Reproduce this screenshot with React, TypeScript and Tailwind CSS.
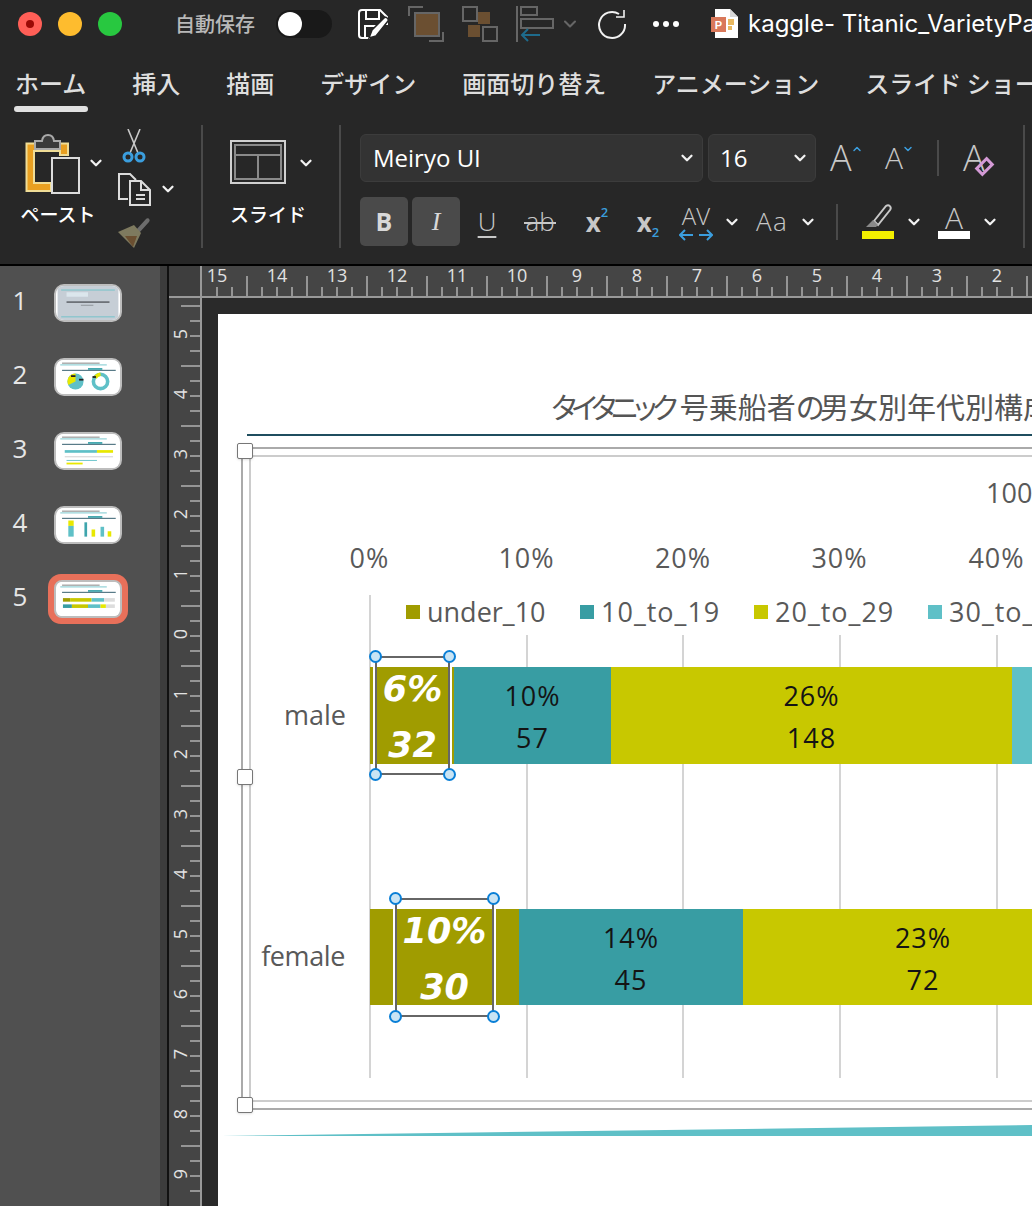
import { ChevronDown, ChevronUp } from "lucide-react";

const tabs = ["ホーム", "挿入", "描画", "デザイン", "画面切り替え", "アニメーション", "スライド ショー"];
const hNums = [15, 14, 13, 12, 11, 10, 9, 8, 7, 6, 5, 4, 3, 2];
const vNums = [5, 4, 3, 2, 1, 0, 1, 2, 3, 4, 5, 6, 7, 8, 9];
const gridLeft = ["left-[308px]", "left-[464px]", "left-[621px]", "left-[778px]"];

function Chev({ className = "" }: { className?: string }) {
  return <ChevronDown className={`size-[18px] shrink-0 text-[#f2f2f2] ${className}`} strokeWidth={3} />;
}

function Divider({ className = "" }: { className?: string }) {
  return <div className={`w-[2px] bg-[#4a4a4a] ${className}`} />;
}

function SaveIcon() {
  return (
    <svg width="32" height="30" viewBox="0 0 32 30" fill="none" stroke="#fff" strokeWidth="2" className="ml-[26px] shrink-0">
      <path d="M4 1h18l7 7v8M4 1a3 3 0 0 0-3 3v22a3 3 0 0 0 3 3h8" />
      <path d="M8 1v9h13V1M7 29V17h13" />
      <path d="M11 29l3-8L26 9c2-2 5 1 4 3L18 27z" fill="#fff" stroke="#272727" strokeWidth="1.5" />
    </svg>
  );
}

function ArrangeFront() {
  return (
    <svg width="36" height="36" viewBox="0 0 36 36" fill="none" className="ml-[18px] shrink-0">
      <path d="M1 10V1h14" stroke="#666" strokeWidth="2" />
      <path d="M35 26v9H21" stroke="#666" strokeWidth="2" />
      <rect x="7" y="7" width="24" height="23" fill="#6b4f31" stroke="#666" strokeWidth="2" />
    </svg>
  );
}

function GroupIcon() {
  return (
    <svg width="36" height="36" viewBox="0 0 36 36" fill="none" className="ml-[18px] shrink-0">
      <rect x="1" y="1" width="14" height="14" stroke="#666" strokeWidth="2" />
      <rect x="16" y="6" width="12" height="12" fill="#6b4f31" />
      <rect x="6" y="19" width="12" height="12" fill="#6b4f31" />
      <rect x="21" y="21" width="14" height="14" stroke="#666" strokeWidth="2" />
    </svg>
  );
}

function AlignIcon() {
  return (
    <svg width="38" height="36" viewBox="0 0 38 36" fill="none" className="ml-[18px] shrink-0">
      <path d="M1 0v36" stroke="#666" strokeWidth="2" />
      <rect x="5" y="1" width="16" height="8" stroke="#666" strokeWidth="2" />
      <rect x="5" y="13" width="32" height="9" stroke="#666" strokeWidth="2" />
      <path d="M24 29H6m6-6l-6 6 6 6" stroke="#1e6b8c" strokeWidth="2" />
    </svg>
  );
}

function RedoIcon() {
  return (
    <svg width="30" height="30" viewBox="0 0 30 30" fill="none" stroke="#f2f2f2" strokeWidth="2" className="ml-[17px] shrink-0">
      <path d="M22 5a13 13 0 1 0 6 10" />
      <path d="M19 8h8V1" strokeWidth="1.6" />
    </svg>
  );
}

function PptIcon() {
  return (
    <svg width="28" height="30" viewBox="0 0 28 30" className="ml-[32px] shrink-0">
      <path d="M4 0h15l8 8v21H4z" fill="#fff" />
      <path d="M19 0l8 8h-8z" fill="#d8d8d8" />
      <rect x="17" y="10" width="6" height="6" fill="#e8b860" />
      <rect x="17" y="17" width="4" height="4" fill="#e8b860" />
      <rect x="0" y="8" width="15" height="15" fill="#d9785a" />
      <text x="7.5" y="20" textAnchor="middle" fontSize="11" fontWeight="700" fill="#fff" fontFamily="Liberation Sans">P</text>
    </svg>
  );
}

function PasteIcon() {
  return (
    <svg width="56" height="62" viewBox="0 0 56 62" fill="none" className="ml-[5px] self-start">
      <path d="M1.5 10.5H43V22H35V18H9V50H26V58H1.5Z" fill="#e9a021" stroke="#f0dd96" strokeWidth="2" />
      <path d="M10 16V8h7c1-8 11-8 12 0h6v8z" fill="#3a3a3a" stroke="#a9a9a9" strokeWidth="2" />
      <rect x="27" y="25" width="27" height="35" stroke="#dcdcdc" strokeWidth="2" />
    </svg>
  );
}

function CutIcon() {
  return (
    <svg width="24" height="34" viewBox="0 0 24 34" fill="none">
      <path d="M18 0L8 24M6 0l10 24" stroke="#c8c8c8" strokeWidth="1.6" />
      <circle cx="6" cy="28" r="4" stroke="#3b9ede" strokeWidth="3" />
      <circle cx="18" cy="28" r="4" stroke="#3b9ede" strokeWidth="3" />
    </svg>
  );
}

function CopyIcon() {
  return (
    <svg width="34" height="34" viewBox="0 0 34 34" fill="none" stroke="#dcdcdc" strokeWidth="2">
      <path d="M11 27H2V2h11l6 6" />
      <path d="M13 9h11l9 9v15H13z" fill="#272727" />
      <path d="M24 9v9h9M19 23h9M19 27h9" />
    </svg>
  );
}

function BrushIcon() {
  return (
    <svg width="34" height="32" viewBox="0 0 34 32">
      <path d="M19 14l10-11c2-2 5 1 3 3L22 17z" fill="#6d6d6d" />
      <path d="M1 16l16-7 7 8-7 15z" fill="#7e7a5f" />
      <path d="M8 20l12 0-4 11z" fill="#6b4f31" />
    </svg>
  );
}

function LayoutIcon() {
  return (
    <svg width="56" height="44" viewBox="0 0 56 44" fill="none" stroke="#d0d0d0" className="self-start">
      <rect x="1" y="1" width="54" height="42" strokeWidth="2" />
      <rect x="5" y="5" width="46" height="34" stroke="#8a8a8a" strokeWidth="2" />
      <path d="M5 15h46M28 15v24" stroke="#8a8a8a" strokeWidth="2" />
    </svg>
  );
}

function Thumb({ n }: { n: number }) {
  return (
    <svg viewBox="0 0 68 38" className="h-full w-full">
      {n === 1 ? (
        <>
          <rect width="68" height="38" fill="#c6ced6" />
          <rect x="4" y="4" width="60" height="1" fill="#6cc2c9" />
          <rect x="10" y="17" width="48" height="2" fill="#6d7278" />
          <rect x="26" y="21" width="14" height="1" fill="#8a8f95" />
          <rect x="10" y="7" width="24" height="5" fill="#dbe6ec" />
          <rect x="4" y="34" width="60" height="1" fill="#6cc2c9" />
        </>
      ) : (
        <>
          <rect width="68" height="38" fill="#fff" />
          <rect x="5" y="3" width="42" height="1" fill="#777" />
          <rect x="3" y="5" width="52" height="1" fill="#6cc2c9" />
          <rect x="5" y="11" width="60" height="1" fill="#1f4e5f" />
          <rect x="34" y="9" width="16" height="2" fill="#3fa5ad" />
        </>
      )}
      {n === 2 && (
        <>
          <circle cx="20" cy="24" r="9" fill="#5fc0c7" />
          <path d="M20 24V15a9 9 0 0 0-8 13z" fill="#e8e800" />
          <circle cx="48" cy="24" r="8" fill="none" stroke="#5fc0c7" strokeWidth="4" />
          <path d="M42 20a8 8 0 0 1 6-4" fill="none" stroke="#e8e800" strokeWidth="4" />
          <rect x="15" y="17" width="5" height="2" fill="#222" />
          <rect x="24" y="21" width="5" height="2" fill="#222" />
          <rect x="39" y="18" width="4" height="2" fill="#222" />
        </>
      )}
      {n === 3 && (
        <>
          <rect x="8" y="18" width="36" height="3" fill="#5fc0c7" />
          <rect x="44" y="18" width="18" height="3" fill="#e8e800" />
          <rect x="10" y="29" width="34" height="1" fill="#5fc0c7" />
          <rect x="10" y="32" width="18" height="2" fill="#e8e800" />
          <rect x="8" y="25" width="54" height="1" fill="#ccc" />
        </>
      )}
      {n === 4 && (
        <>
          <rect x="12" y="14" width="6" height="6" fill="#e8e800" />
          <rect x="12" y="20" width="6" height="12" fill="#5fc0c7" />
          <rect x="30" y="16" width="3" height="16" fill="#3fa5ad" />
          <rect x="38" y="24" width="4" height="8" fill="#e8e800" />
          <rect x="48" y="21" width="4" height="11" fill="#5fc0c7" />
          <rect x="56" y="26" width="4" height="6" fill="#e8e800" />
        </>
      )}
      {n === 5 && (
        <>
          <rect x="6" y="18" width="8" height="4" fill="#a09c00" />
          <rect x="14" y="18" width="24" height="4" fill="#c8c800" />
          <rect x="38" y="18" width="14" height="4" fill="#5fc0c7" />
          <rect x="52" y="18" width="12" height="4" fill="#ddd" />
          <rect x="6" y="25" width="10" height="4" fill="#389da3" />
          <rect x="16" y="25" width="18" height="4" fill="#c8c800" />
          <rect x="34" y="25" width="14" height="4" fill="#5fc0c7" />
          <rect x="48" y="25" width="6" height="4" fill="#e8e800" />
          <rect x="54" y="25" width="10" height="4" fill="#ddd" />
        </>
      )}
    </svg>
  );
}

function Handle({ className }: { className: string }) {
  return <span className={`absolute size-[13px] rounded-full border-2 border-[#0a7fd6] bg-[#c9e4f4] ${className}`} />;
}

function FrameHandle({ className }: { className: string }) {
  return <span className={`absolute left-[19px] size-[16px] rounded-[2px] border border-[#777] bg-white shadow-sm ${className}`} />;
}

function SelectedLabel({ className, pct, count }: { className: string; pct: string; count: string }) {
  return (
    <div className={`absolute flex flex-col items-center justify-center border-2 border-[#666] pt-[3px] font-['DejaVu_Sans',sans-serif] text-[35px] font-bold italic leading-[56px] text-white ring-2 ring-white ${className}`}>
      <span>{pct}</span>
      <span>{count}</span>
      <Handle className="-left-[8px] -top-[8px]" />
      <Handle className="-right-[8px] -top-[8px]" />
      <Handle className="-bottom-[8px] -left-[8px]" />
      <Handle className="-bottom-[8px] -right-[8px]" />
    </div>
  );
}

function Seg({ className, pct, count }: { className: string; pct?: string; count?: string }) {
  return (
    <div className={`flex shrink-0 flex-col items-center justify-center pt-[3px] text-[27px] leading-[42px] tracking-[1px] text-[#141414] ${className}`}>
      {pct && <span>{pct}</span>}
      {count && <span>{count}</span>}
    </div>
  );
}

export default function App() {
  return (
    <div className="flex h-[1206px] w-[1032px] flex-col overflow-hidden bg-[#272727] font-['Noto_Sans_CJK_JP',sans-serif]">
      {/* title bar */}
      <div className="flex h-[48px] shrink-0 items-center whitespace-nowrap">
        <div className="ml-[18px] flex shrink-0 gap-[16px]">
          <span className="flex size-[24px] items-center justify-center rounded-full bg-[#ff5f57]">
            <span className="size-[8px] rounded-full bg-[#9a0a06]" />
          </span>
          <span className="size-[24px] rounded-full bg-[#febc2e]" />
          <span className="size-[24px] rounded-full bg-[#28c840]" />
        </div>
        <span className="ml-[53px] w-[80px] shrink-0 text-[20px] font-medium leading-none text-[#b8b8b8]">自動保存</span>
        <div className="ml-[21px] flex h-[28px] w-[56px] shrink-0 items-center rounded-full bg-[#191919] pl-[2px]">
          <span className="size-[24px] rounded-full bg-white" />
        </div>
        <SaveIcon />
        <ArrangeFront />
        <GroupIcon />
        <AlignIcon />
        <ChevronDown className="ml-[6px] size-[20px] shrink-0 text-[#666]" strokeWidth={2.5} />
        <RedoIcon />
        <div className="ml-[26px] flex shrink-0 gap-[4px]">
          <span className="size-[6px] rounded-full bg-white" />
          <span className="size-[6px] rounded-full bg-white" />
          <span className="size-[6px] rounded-full bg-white" />
        </div>
        <PptIcon />
        <span className="ml-[9px] min-w-0 flex-1 overflow-hidden font-['Inter',sans-serif] text-[24px] leading-[30px] text-white">kaggle- Titanic_VarietyPart</span>
      </div>

      {/* tabs */}
      <div className="flex h-[77px] shrink-0 gap-[46px] whitespace-nowrap pl-[15px] pt-[17px] text-[24px] font-medium leading-[36px] text-[#dedede]">
        {tabs.map((t, i) => (
          <div key={t} className="relative">
            {t}
            {i === 0 && <span className="absolute -left-px top-[41px] h-[6px] w-[74px] rounded-full bg-[#e0e0e0]" />}
          </div>
        ))}
      </div>

      {/* ribbon */}
      <div className="flex h-[139px] shrink-0 items-start text-white">
        <div className="flex h-[123px] w-[201px] shrink-0">
          <div className="ml-[20px] flex w-[76px] flex-col items-center pt-[8px]">
            <PasteIcon />
            <span className="mt-[5px] text-[19px] font-medium leading-[28px]">ペースト</span>
          </div>
          <Chev className="-ml-[9px] mt-[29px]" />
          <div className="ml-[12px] flex flex-col pt-[4px]">
            <div className="ml-[5px]"><CutIcon /></div>
            <div className="mt-[9px] flex items-center">
              <CopyIcon />
              <Chev className="ml-[8px]" />
            </div>
            <div className="mt-[10px]"><BrushIcon /></div>
          </div>
        </div>
        <Divider className="h-[123px] shrink-0" />
        <div className="flex h-[123px] w-[136px] shrink-0">
          <div className="ml-[27px] flex w-[76px] flex-col items-center pt-[15px]">
            <LayoutIcon />
            <span className="mt-[16px] text-[19px] font-medium leading-[28px]">スライド</span>
          </div>
          <Chev className="ml-[-9px] mt-[29px]" />
        </div>
        <Divider className="h-[123px] shrink-0" />
        <div className="ml-[19px] flex flex-col pt-[9px]">
          <div className="flex h-[48px] items-center gap-[5px]">
            <div className="flex h-[48px] w-[343px] items-center justify-between rounded-[6px] border border-[#3c3c3c] bg-[#333333] pl-[12px] pr-[6px] font-['Open_Sans',sans-serif] text-[24px]">
              Meiryo UI <Chev />
            </div>
            <div className="flex h-[48px] w-[108px] items-center justify-between rounded-[6px] border border-[#3c3c3c] bg-[#333333] pl-[11px] pr-[6px] font-['Open_Sans',sans-serif] text-[24px]">
              16 <Chev />
            </div>
            <div className="ml-[9px] flex w-[36px] items-start font-['Open_Sans',sans-serif] text-[36px] font-light leading-none text-[#c8c8c8]">
              A<ChevronUp className="-ml-[1px] mt-[3px] size-[12px] shrink-0 text-[#3b9ede]" strokeWidth={3} />
            </div>
            <div className="ml-[14px] flex w-[30px] items-start font-['Open_Sans',sans-serif] text-[30px] font-light leading-none text-[#c8c8c8]">
              A<ChevronDown className="-ml-[1px] size-[12px] shrink-0 text-[#3b9ede]" strokeWidth={3} />
            </div>
            <Divider className="ml-[17px] h-[36px]" />
            <div className="relative ml-[19px] w-[36px] font-['Open_Sans',sans-serif] text-[36px] font-light leading-none text-[#c8c8c8]">
              A
              <span className="absolute left-[13px] top-[21px] h-[11px] w-[17px] -rotate-45 border-[3px] border-[#d49ad6]" />
            </div>
          </div>
          <div className="mt-[15px] flex h-[49px] items-center font-['Open_Sans',sans-serif] text-[#c8c8c8]">
            <div className="flex h-[49px] w-[48px] items-center justify-center rounded-[5px] bg-[#4a4a4a] text-[25px] font-bold text-[#d8d8d8]">B</div>
            <div className="ml-[4px] flex h-[49px] w-[48px] items-center justify-center rounded-[5px] bg-[#4a4a4a] font-['Liberation_Serif',serif] text-[26px] italic text-[#d8d8d8]">I</div>
            <div className="ml-[4px] flex w-[46px] justify-center text-[26px] font-light underline decoration-2 underline-offset-[5px]">U</div>
            <div className="relative flex w-[60px] justify-center text-[26px] font-light">
              ab
              <span className="absolute left-[14px] top-[20px] h-[2px] w-[32px] bg-[#c8c8c8]" />
            </div>
            <div className="flex w-[54px] justify-center text-[26px] font-bold leading-none">
              x<span className="-mt-[3px] text-[13px] font-semibold text-[#3b9ede]">2</span>
            </div>
            <div className="flex w-[48px] items-end justify-center text-[26px] font-bold leading-none">
              x<span className="-mb-[4px] text-[13px] font-semibold text-[#3b9ede]">2</span>
            </div>
            <div className="flex w-[48px] flex-col items-center">
              <span className="text-[24px] font-light leading-[26px]">AV</span>
              <svg width="34" height="12" viewBox="0 0 34 12" fill="none" stroke="#3b9ede" strokeWidth="2">
                <path d="M1 6h13M6 1L1 6l5 5M20 6h13M28 1l5 5-5 5" />
              </svg>
            </div>
            <div className="flex w-[24px] justify-center"><Chev /></div>
            <div className="flex w-[56px] justify-center text-[26px] font-light tracking-wider">Aa</div>
            <div className="flex w-[16px] justify-center"><Chev /></div>
            <Divider className="ml-[20px] h-[36px]" />
            <div className="ml-[24px] flex w-[32px] flex-col items-center">
              <svg width="28" height="26" viewBox="0 0 28 26" fill="none">
                <path d="M10 17L22 2c3-2 6 1 4 4L14 21z" stroke="#c8c8c8" strokeWidth="2" />
                <path d="M9 16l5 5-2 2H2z" fill="#8a8a8a" />
              </svg>
              <span className="mt-[1px] h-[8px] w-[32px] bg-[#f4f000]" />
            </div>
            <div className="ml-[11px] flex w-[18px] justify-center"><Chev /></div>
            <div className="ml-[15px] flex w-[32px] flex-col items-center">
              <span className="h-[26px] text-[30px] font-light leading-[28px]">A</span>
              <span className="mt-[1px] h-[8px] w-[32px] bg-white" />
            </div>
            <div className="ml-[11px] flex w-[18px] justify-center"><Chev /></div>
            <Divider className="ml-[24px] -mt-[72px] h-[123px] self-start" />
          </div>
        </div>
      </div>

      <div className="flex min-h-0 flex-1 border-t-2 border-black">
        {/* slide list */}
        <div className="flex w-[160px] shrink-0 flex-col bg-[#505050] pt-[18px]">
          {[1, 2, 3, 4].map((n) => (
            <div key={n} className="mb-[36px] flex h-[38px] items-center">
              <span className="-mt-[6px] w-[40px] text-center font-['Open_Sans',sans-serif] text-[26px] leading-none text-[#e6e6e6]">{n}</span>
              <div className="ml-[14px] h-[38px] w-[68px] overflow-hidden rounded-[10px] border-2 border-[#bdbdbd] bg-white">
                <Thumb n={n} />
              </div>
            </div>
          ))}
          <div className="-mt-[6px] flex h-[50px] items-center">
            <span className="-mt-[6px] w-[40px] text-center font-['Open_Sans',sans-serif] text-[26px] leading-none text-[#e6e6e6]">5</span>
            <div className="ml-[8px] h-[50px] w-[80px] rounded-[13px] bg-[#e8705a] p-[6px]">
              <div className="h-[38px] w-[68px] overflow-hidden rounded-[8px] border-2 border-[#bdbdbd] bg-white">
                <Thumb n={5} />
              </div>
            </div>
          </div>
        </div>
        <div className="w-[7px] shrink-0 bg-[#3c3c3c]" />
        <div className="w-[2px] shrink-0 bg-[#111]" />

        {/* editor */}
        <div className="flex min-w-0 flex-1 flex-col">
          {/* top ruler */}
          <div className="flex h-[32px] shrink-0 border-b-2 border-[#999]">
            <div className="w-[33px] shrink-0 border-r-2 border-[#999] bg-[#3e3e3e]" />
            <div className="relative flex-1 overflow-hidden bg-[#454545]">
              <div className="-ml-[15px] flex font-['Open_Sans',sans-serif] text-[18px] leading-[18px] text-[#e2e2e2]">
                {hNums.map((n, i) => (
                  <span key={i} className="w-[60px] shrink-0 text-center">{n}</span>
                ))}
              </div>
              <svg className="absolute inset-0" width="830" height="30" stroke="#b0b0b0" strokeWidth="1.5">
                {Array.from({ length: 56 }, (_, i) => {
                  const long = i % 4 === 2;
                  return <line key={i} x1={15 + i * 15} x2={15 + i * 15} y1={long ? 10 : 21} y2={30} />;
                })}
              </svg>
            </div>
          </div>
          <div className="flex min-h-0 flex-1">
            {/* left ruler */}
            <div className="relative w-[33px] shrink-0 overflow-hidden border-r-2 border-[#999] bg-[#454545]">
              <div className="flex flex-col pt-[6px] font-['Open_Sans',sans-serif] text-[18px] leading-none text-[#e2e2e2]">
                {vNums.map((n, i) => (
                  <div key={i} className="flex h-[60px] w-[22px] shrink-0 items-center justify-center">
                    <span className="-rotate-90">{n}</span>
                  </div>
                ))}
              </div>
              <svg className="absolute inset-0" width="31" height="910" stroke="#b0b0b0" strokeWidth="1.5">
                {Array.from({ length: 60 }, (_, i) => {
                  const long = i % 4 === 0;
                  return <line key={i} y1={8 + i * 15} y2={8 + i * 15} x1={long ? 12 : 21} x2={31} />;
                })}
              </svg>
            </div>
            <div className="w-[16px] shrink-0 bg-[#2a2a2a]" />
            {/* slide */}
            <div className="flex min-w-0 flex-1 flex-col bg-[#2a2a2a] pt-[16px]">
              <div className="relative flex-1 overflow-hidden bg-white font-['Open_Sans','Noto_Sans_CJK_JP',sans-serif] text-[#595959]">
                <div className="absolute left-[332px] top-[69px] whitespace-nowrap font-['Noto_Sans_CJK_JP',sans-serif] text-[29px] leading-[46px] text-[#555555]">
                  <span className="tracking-[-8.5px]">タイタニック</span>
                  <span className="ml-[8px]">号乗船者</span>
                  <span className="tracking-[-5px]">の</span>
                  <span>男女別年代別構成</span>
                </div>
                <div className="absolute left-[29px] top-[120px] h-[2px] w-[800px] bg-[#1f4e5f]" />

                {/* chart frame */}
                <div className="absolute left-[23px] top-[133px] h-[663px] w-[900px] border-2 border-[#aaaaaa]" />
                <div className="absolute left-[31px] top-[141px] h-[647px] w-[900px] border-2 border-[#cccccc]" />

                <div className="absolute left-[768px] top-[159px] text-[27px] leading-[40px]">100%</div>

                <div className="absolute left-[73px] top-[224px] flex text-center text-[27px] leading-[40px] tracking-[1px]">
                  <span className="w-[157px]">0%</span>
                  <span className="w-[157px]">10%</span>
                  <span className="w-[156px]">20%</span>
                  <span className="w-[157px]">30%</span>
                  <span className="w-[157px]">40%</span>
                </div>

                <div className="absolute left-[151px] top-[281px] h-[483px] w-[2px] bg-[#d4d4d4]" />
                {gridLeft.map((l) => (
                  <div key={l} className={`absolute top-[321px] h-[443px] w-[2px] bg-[#d4d4d4] ${l}`} />
                ))}

                <div className="absolute left-[188px] top-[278px] flex items-center text-[27px] leading-[40px]">
                  <span className="size-[14px] bg-[#a09c00]" />
                  <span className="ml-[7px] w-[153px]">under_10</span>
                  <span className="size-[14px] bg-[#389da3]" />
                  <span className="ml-[7px] w-[153px] tracking-[1px]">10_to_19</span>
                  <span className="size-[14px] bg-[#c8c800]" />
                  <span className="ml-[7px] w-[153px] tracking-[1px]">20_to_29</span>
                  <span className="size-[14px] bg-[#5fc0c7]" />
                  <span className="ml-[7px] w-[153px] tracking-[1px]">30_to_39</span>
                </div>

                <div className="absolute right-[686px] top-[381px] text-[27px] leading-[40px]">male</div>
                <div className="absolute right-[687px] top-[622px] text-[27px] leading-[40px] tracking-[-0.4px]">female</div>

                <div className="absolute left-[152px] top-[353px] flex h-[97px]">
                  <Seg className="w-[84px] bg-[#a09c00]" />
                  <Seg className="w-[157px] bg-[#389da3]" pct="10%" count="57" />
                  <Seg className="w-[401px] bg-[#c8c800]" pct="26%" count="148" />
                  <Seg className="w-[200px] bg-[#5fc0c7]" />
                </div>
                <div className="absolute left-[152px] top-[595px] flex h-[96px]">
                  <Seg className="w-[149px] bg-[#a09c00]" />
                  <Seg className="w-[224px] bg-[#389da3]" pct="14%" count="45" />
                  <Seg className="w-[360px] bg-[#c8c800]" pct="23%" count="72" />
                </div>

                <SelectedLabel className="left-[157px] top-[342px] h-[119px] w-[75px]" pct="6%" count="32" />
                <SelectedLabel className="left-[177px] top-[584px] h-[119px] w-[99px]" pct="10%" count="30" />

                <FrameHandle className="top-[129px]" />
                <FrameHandle className="top-[455px]" />
                <FrameHandle className="top-[783px]" />

                <svg className="absolute left-0 top-[808px]" width="814" height="16" viewBox="0 0 814 16">
                  <polygon points="4,14 814,3 814,14" fill="#5fc0c7" />
                </svg>
              </div>
            </div>
          </div>
        </div>
      </div>
    </div>
  );
}
